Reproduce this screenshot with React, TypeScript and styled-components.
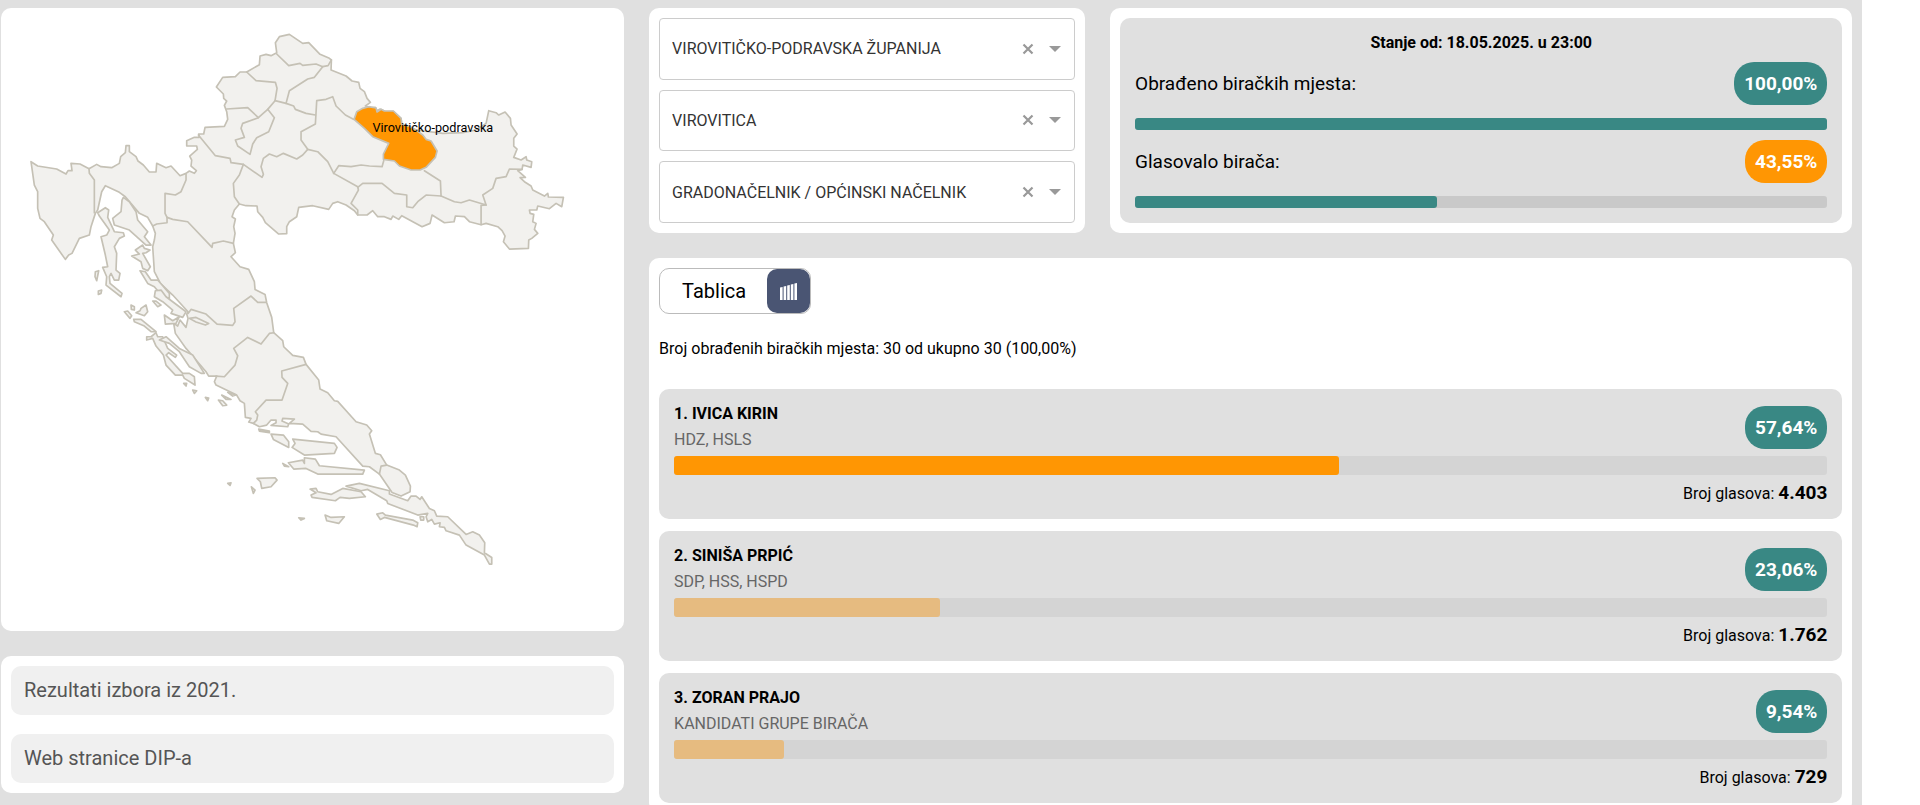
import React, { useState } from "react";
import styled, { createGlobalStyle } from "styled-components";

const GlobalStyle = createGlobalStyle`
  *, *::before, *::after { box-sizing: border-box; }
  body {
    margin: 0;
    background: #fff;
    color: #000;
    font: 400 16px/19px Roboto, "Liberation Sans", sans-serif;
  }
  button, select { font: inherit; }
`;

const Page = styled.main`
  display: grid;
  grid-template-columns: minmax(0, 29fr) minmax(0, 56fr);
  gap: 25px;
  align-items: start;
  width: 97%;
  min-height: 100vh;
  padding: 8px 10px 12px 1px;
  background: #e0e0e0;
`;

const Column = styled.div`
  display: flex;
  flex-direction: column;
  gap: 25px;
`;

const TopRow = styled.div`
  display: grid;
  grid-template-columns: minmax(0, 37fr) minmax(0, 63fr);
  gap: 25px;
`;

const Card = styled.section`
  padding: 10px;
  border-radius: 10px;
  background: #fff;
`;

const MapCard = styled.section`
  aspect-ratio: 1;
  border-radius: 10px;
  background: #fff;
`;

const MapSvg = styled.svg`
  display: block;
  width: 100%;
  height: 100%;
  fill: #f2f1ee;
  stroke: #c5c1b5;
  stroke-width: 5;
  stroke-linejoin: round;
  stroke-linecap: round;
`;

const Borders = styled.g`
  fill: none;
`;

const Selected = styled.path`
  fill: #ff9603;
`;

const MapLabel = styled.text`
  fill: #000;
  stroke: none;
  font-size: 38px;
`;

const LinkCard = styled(Card).attrs({ as: "nav" })`
  display: flex;
  flex-direction: column;
  gap: 19px;
`;

const PageLink = styled.a`
  padding: 12px 13px;
  border-radius: 10px;
  background: #f0f0f0;
  color: #555;
  font-size: 20px;
  line-height: 25px;
  text-decoration: none;
`;

const Filters = styled(Card)`
  display: grid;
  grid-auto-rows: 1fr;
  gap: 10px;
`;

const FilterBox = styled.div`
  display: flex;
  align-items: center;
  gap: 12px;
  padding: 0 12px;
  border: 1px solid #ccc;
  border-radius: 4px;
`;

const FilterSelect = styled.select`
  flex: 1;
  min-width: 0;
  height: 100%;
  padding: 0;
  border: 0;
  background: none;
  color: #333;
  appearance: none;
  text-overflow: ellipsis;
`;

const ClearButton = styled.button`
  display: flex;
  padding: 2px;
  border: 0;
  background: none;
  color: #999;
  cursor: pointer;
`;

const Status = styled.div`
  display: flex;
  flex-direction: column;
  gap: 10px;
  padding: 15px;
  border-radius: 10px;
  background: #e0e0e0;
`;

const StatusTitle = styled.h2`
  margin: 0;
  font-size: 16px;
  font-weight: 700;
  line-height: 19px;
  text-align: center;
`;

const StatusItem = styled.div`
  display: flex;
  flex-direction: column;
  gap: 13px;
`;

const SpreadRow = styled.div`
  display: flex;
  align-items: end;
  justify-content: space-between;
`;

const StatusLabel = styled.span`
  align-self: center;
  font-size: 19px;
  line-height: 23px;
`;

const Badge = styled.span<{ $color?: string }>`
  padding: 10px;
  border-radius: 20px;
  background: ${(p) => p.$color ?? "#398884"};
  color: #fff;
  font-size: 19px;
  font-weight: 700;
  line-height: 23px;
`;

const Track = styled.div<{ $height: number; $color: string }>`
  height: ${(p) => p.$height}px;
  border-radius: 3px;
  background: ${(p) => p.$color};
`;

const Fill = styled.div<{ $color: string }>`
  height: 100%;
  border-radius: 3px;
  background: ${(p) => p.$color};
`;

const Toggle = styled.div`
  display: flex;
  width: fit-content;
  height: 46px;
  border: 1px solid #bbb;
  border-radius: 10px;
`;

const TableButton = styled.button`
  padding: 0 21px 0 22px;
  border: 0;
  border-radius: 10px;
  background: none;
  color: #000;
  font-size: 20px;
  cursor: pointer;
`;

const ChartButton = styled.button`
  display: grid;
  place-items: center;
  width: 43px;
  padding: 0;
  border: 0;
  border-radius: 10px;
  background: #4a5573;
  cursor: pointer;
`;

const Summary = styled.p`
  margin: 25px 0 31px;
`;

const Results = styled.ol`
  display: flex;
  flex-direction: column;
  gap: 12px;
  margin: 0;
  padding: 0;
  list-style: none;
`;

const Result = styled.li`
  display: flex;
  flex-direction: column;
  padding: 15px;
  border-radius: 10px;
  background: #e0e0e0;
`;

const Candidate = styled.div`
  display: flex;
  flex-direction: column;
  gap: 7px;
`;

const CandidateRow = styled(SpreadRow)`
  margin-bottom: 7px;
`;

const Name = styled.strong`
  font-weight: 700;
`;

const Parties = styled.span`
  color: #666;
`;

const Votes = styled.p`
  display: flex;
  align-items: baseline;
  justify-content: flex-end;
  gap: 4px;
  margin: 6px 0 0;
`;

const VoteCount = styled.strong`
  font-size: 19px;
  font-weight: 700;
  line-height: 23px;
`;

const mainland =
  "M95 485L115 498L172 507L200 522L206 512L218 512L215 490L242 492L269 506L292 493L305 500L337 503L360 490L364 470L378 458L380 437L390 437L390 455L410 470L416 483L432 495L450 516L470 516L472 490L500 503L515 498L542 527L560 520L570 513L585 520L591 512L575 498L577 480L571 468L594 448L592 438L562 438L562 422L585 412L600 412L598 402L613 402L617 382L675 379L685 358L682 335L675 316L682 303L673 295L672 282L651 261L670 232L708 230L722 216L742 216L780 194L782 168L800 163L815 167L832 158L828 128L840 110L870 103L910 130L928 128L962 163L990 175L996 180L995 210L1040 228L1058 243L1078 247L1082 265L1095 275L1103 295L1113 307L1098 318L1115 323L1128 322L1133 332L1142 327L1160 335L1182 334L1205 355L1207 373L1250 390L1330 400L1390 398L1430 390L1460 370L1468 332L1490 338L1498 345L1517 336L1533 355L1535 375L1553 402L1543 415L1543 438L1553 447L1543 472L1565 480L1580 470L1582 480L1597 485L1595 502L1570 495L1568 508L1555 512L1578 532L1562 533L1575 545L1595 558L1600 570L1635 588L1645 580L1647 591L1692 592L1687 620L1670 610L1650 626L1615 618L1612 630L1590 630L1592 640L1603 643L1600 665L1610 670L1605 688L1615 700L1597 715L1588 720L1587 745L1530 747L1512 725L1517 708L1508 692L1495 680L1460 670L1445 674L1410 665L1395 650L1368 648L1364 665L1335 668L1298 645L1292 670L1268 680L1207 647L1198 658L1180 648L1175 658L1155 650L1135 650L1120 632L1103 645L1075 645L1065 632L1040 615L1015 605L1000 610L988 628L940 617L898 622L892 650L870 665L862 680L862 701L838 702L798 668L790 652L775 635L773 618L740 617L720 612L705 630L698 650L708 657L703 680L707 700L702 730L708 758L695 770L722 800L748 808L765 845L767 868L797 883L802 908L817 952L823 998L850 1022L853 1040L880 1066L912 1072L920 1093L958 1140L962 1167L985 1178L1005 1202L1015 1204L1070 1265L1102 1275L1117 1292L1110 1302L1128 1360L1143 1364L1162 1395L1200 1410L1218 1425L1233 1458L1232 1475L1205 1488L1178 1477L1140 1422L1110 1400L1090 1398L1010 1310L965 1302L955 1295L935 1294L910 1272L870 1270L885 1257L850 1255L848 1263L868 1272L865 1280L815 1276L830 1268L830 1260L815 1260L802 1275L780 1280L762 1270L748 1266L755 1255L738 1252L735 1210L722 1202L712 1185L650 1155L645 1145L652 1128L628 1128L620 1115L560 1045L528 1000L523 970L535 978L542 960L560 982L566 955L562 942L566 935L520 885L483 850L465 815L460 740L465 720L468 700L460 678L445 652L420 640L378 590L360 577L318 557L307 575L295 630L288 640L275 680L270 705L240 715L218 760L208 765L198 778L157 720L162 705L135 665L122 655L115 625L115 575L105 555Z";

const northBorders = [
  "M27 345L78 407L122 415L125 428L162 433L218 472L222 463L215 440L222 415L240 402L262 410L282 400L322 417L340 405L355 388",
  "M162 433L150 465L132 490L135 530L150 552",
  "M207 293L160 310L155 325L165 352L138 360L145 378L182 403L190 372L202 353L238 335L255 293L235 268Z",
  "M112 267L175 263L207 293",
  "M172 156L200 182L258 187L263 205L257 242L235 268",
  "M257 242L290 250L313 258L318 268L350 280L378 285",
  "M262 102L298 137L332 130L340 136L380 132L400 140L416 137L426 120",
  "M400 140L375 172L355 177L300 212L290 250",
  "M492 298L468 285L440 258L430 230L410 238L382 242L378 312L335 335L335 360L355 388L385 395L415 425L433 460",
  "M433 460L448 437L485 440L515 435L540 438L578 440L583 422",
  "M433 460L505 500L507 510L485 550L505 570L505 585",
];

const eastBorders = [
  "M85 322L100 310L158 310L195 340L232 345L232 380L250 383L265 365L290 345L335 348L333 303L285 272",
  "M335 348L375 365L395 368L420 360L470 375L460 345L490 325L500 295L530 290L540 267L578 268",
  "M470 375L455 376L455 434",
];

const westBorders = [
  "M209 116L210 130L225 150L225 248",
  "M500 133L500 150L485 185L468 195L437 190L437 250L443 262L443 278L412 282L400 288",
  "M443 262L460 268L505 275L578 352L580 340L612 333L642 340",
];

const zadarBorders = [
  "M296 220L305 208L350 222L383 252L430 256L437 245L433 205L485 168L505 187L530 187",
  "M380 408L405 410L437 375L445 347L433 325L475 292L515 312L540 280L553 278",
  "M650 373L577 393L578 412L595 430L578 480L530 480L498 515L505 525L502 540L492 550",
];

const kvarnerIslands = [
  "M235 248L258 233L268 240L265 262L285 305L312 308L315 318L300 325L285 350L292 370L290 420L302 430L298 450L285 450L275 430L270 440L272 460L308 490L305 500L260 465L262 440L250 412L265 410L258 375L245 320L262 315L270 300L240 258Z",
  "M312 202L330 215L350 245L355 270L385 305L375 320L395 345L380 345L330 300L285 285L280 265L305 245L308 210Z",
  "M348 360L370 345L375 355L392 360L380 368L370 370L393 410L385 422L370 415L365 395L337 378L360 372Z",
  "M362 422L378 425L395 450L415 450L450 490L450 505L430 500L405 470L385 460Z",
  "M408 482L425 480L440 500L500 545L490 562L455 550L460 540L430 515L405 500Z",
  "M435 555L460 572L480 560L470 580L438 582Z",
  "M228 425L238 422L232 452L227 440Z",
  "M237 483L247 480L245 490L237 493Z",
  "M315 545L325 543L337 557L332 565Z",
  "M335 525L345 530L345 540L336 538Z",
  "M365 535L380 525L385 545L375 557L350 548L362 542Z",
  "M400 513L410 513L425 525L415 530Z",
  "M510 565L530 562L568 580L558 585L530 576Z",
];

const zadarIslands = [
  "M133 238L155 238L200 275L185 275L165 258L135 245Z",
  "M172 290L185 290L200 278L205 290L220 290L235 325L262 345L258 352L238 338L230 345L280 400L300 400L315 410L317 435L285 415L280 405L258 405L230 375L222 345L200 318L190 295L172 300Z",
  "M210 300L230 290L270 325L310 345L345 400L335 400L300 380L270 335L240 310Z",
  "M283 430L292 430L290 438Z",
  "M310 450L322 452L315 460Z",
  "M348 472L358 474L355 482Z",
  "M387 480L400 482L412 495L400 497Z",
  "M397 465L425 478L410 478Z",
  "M415 457L440 465L430 468Z",
];

const southIslands = [
  "M500 378L540 370L630 392L630 402L685 422L695 408L710 408L722 418L727 410L750 445L765 452L772 468L805 470L860 523L880 515L900 525L916 548L915 578L937 592L937 612L930 612L915 585L860 555L840 525L800 512L795 502L780 500L782 488L765 492L757 478L745 485L740 470L745 460L715 465L625 430L622 422L565 388L545 392Z",
  "M275 222L312 225L328 245L328 262L282 238Z",
  "M238 207L270 213L270 218L240 213Z",
  "M340 237L465 250L473 262L465 280L375 285L338 262L347 250Z",
  "M327 308L370 300L375 310L375 293L408 297L420 317L555 330L550 342L415 342L380 325L343 327Z",
  "M310 310L328 320L315 318Z",
  "M233 355L287 353L293 360L275 380L247 385L243 365Z",
  "M216 380L227 390L222 400Z",
  "M145 370L155 368L152 376Z",
  "M392 387L410 385L415 395L455 403L490 385L545 395L558 410L510 415L482 412L468 422L398 412L395 405L410 398Z",
  "M437 465L455 472L495 470L478 490L442 482Z",
  "M358 473L375 475L365 480Z",
  "M592 462L610 458L618 465L700 480L715 488L713 500L702 495L615 472L603 478Z",
  "M722 470L733 470L733 480L724 480Z",
];

const selectedCounty =
  "M74 118L82 95L100 85L118 80L140 84L143 96L155 88L165 93L192 93L215 115L217 133L238 138L260 150L280 165L290 178L305 183L323 213L318 232L290 262L272 270L245 270L210 258L195 243L162 238L162 222L178 190L130 170L105 145Z";

const paths = (list: string[]) => list.map((d) => <path key={d} d={d} />);

function CountyMap() {
  return (
    <MapSvg viewBox="5 24 1869 1869" role="img" aria-label="Karta županija">
      <path d={mainland} />
      <g transform="translate(60 390)">{paths(kvarnerIslands)}</g>
      <g transform="translate(270 720)">{paths(zadarIslands)}</g>
      <g transform="translate(540 1080)">{paths(southIslands)}</g>
      <Borders>
        <g transform="translate(570 60)">{paths(northBorders)}</g>
        <g transform="translate(990 240)">{paths(eastBorders)}</g>
        <g transform="translate(60 390)">{paths(westBorders)}</g>
        <g transform="translate(270 720)">{paths(zadarBorders)}</g>
        <path d="M1162 1395L1145 1398L1140 1422" />
      </Borders>
      <g transform="translate(990 240)">
        <Selected d={selectedCounty} />
        <MapLabel x="129" y="157">Virovitičko-podravska</MapLabel>
      </g>
    </MapSvg>
  );
}

function Filter({ label, option }: { label: string; option: string }) {
  const [value, setValue] = useState(option);
  return (
    <FilterBox>
      <FilterSelect aria-label={label} value={value} onChange={(e) => setValue(e.target.value)}>
        <option value="" />
        <option value={option}>{option}</option>
      </FilterSelect>
      <ClearButton type="button" aria-label={`Očisti: ${label}`} onClick={() => setValue("")}>
        <svg width="12" height="12" viewBox="0 0 12 12" stroke="currentColor" strokeWidth="2.2">
          <path d="M1.5 1.5L10.5 10.5M10.5 1.5L1.5 10.5" />
        </svg>
      </ClearButton>
      <svg width="14" height="8" viewBox="0 0 14 8" fill="#999" aria-hidden="true">
        <path d="M1 1H13L7 7Z" />
      </svg>
    </FilterBox>
  );
}

interface ProgressProps {
  label: string;
  value: number;
  height: number;
  color: string;
  track: string;
}

function Progress({ label, value, height, color, track }: ProgressProps) {
  return (
    <Track
      role="progressbar"
      aria-label={label}
      aria-valuenow={value}
      aria-valuemin={0}
      aria-valuemax={100}
      $height={height}
      $color={track}
    >
      <Fill $color={color} style={{ width: `${value}%` }} />
    </Track>
  );
}

const percent = (value: number) => `${value.toFixed(2).replace(".", ",")}%`;

const filters = [
  { label: "Županija", option: "VIROVITIČKO-PODRAVSKA ŽUPANIJA" },
  { label: "Grad / općina", option: "VIROVITICA" },
  { label: "Vrsta izbora", option: "GRADONAČELNIK / OPĆINSKI NAČELNIK" },
];

const turnout = [
  { label: "Obrađeno biračkih mjesta:", value: 100, badge: "#398884" },
  { label: "Glasovalo birača:", value: 43.55, badge: "#ff9603" },
];

const candidates = [
  { name: "IVICA KIRIN", parties: "HDZ, HSLS", share: 57.64, votes: "4.403", color: "#ff9603" },
  { name: "SINIŠA PRPIĆ", parties: "SDP, HSS, HSPD", share: 23.06, votes: "1.762", color: "#e6bb80" },
  { name: "ZORAN PRAJO", parties: "KANDIDATI GRUPE BIRAČA", share: 9.54, votes: "729", color: "#e6bb80" },
];

export default function App() {
  return (
    <>
      <GlobalStyle />
      <Page>
        <Column>
          <MapCard>
            <CountyMap />
          </MapCard>
          <LinkCard>
            <PageLink href="#rezultati-2021">Rezultati izbora iz 2021.</PageLink>
            <PageLink href="#dip">Web stranice DIP-a</PageLink>
          </LinkCard>
        </Column>
        <Column>
          <TopRow>
            <Filters>
              {filters.map((f) => (
                <Filter key={f.label} {...f} />
              ))}
            </Filters>
            <Card>
              <Status>
                <StatusTitle>Stanje od: 18.05.2025. u 23:00</StatusTitle>
                {turnout.map((t) => (
                  <StatusItem key={t.label}>
                    <SpreadRow>
                      <StatusLabel>{t.label}</StatusLabel>
                      <Badge $color={t.badge}>{percent(t.value)}</Badge>
                    </SpreadRow>
                    <Progress label={t.label} value={t.value} height={12} color="#398884" track="#c9c9c9" />
                  </StatusItem>
                ))}
              </Status>
            </Card>
          </TopRow>
          <Card>
            <Toggle>
              <TableButton type="button">Tablica</TableButton>
              <ChartButton type="button" aria-label="Grafikon">
                <svg width="18" height="18" viewBox="0 0 18 18" fill="#fff" aria-hidden="true">
                  <path d="M0 5.5L2.6 5V18H0ZM3.6 4.5L6.2 4V18H3.6ZM7.2 3.5L9.8 3V18H7.2ZM10.8 2.5L13.4 2V18H10.8ZM14.4 1.5L17 1V18H14.4Z" />
                </svg>
              </ChartButton>
            </Toggle>
            <Summary>Broj obrađenih biračkih mjesta: 30 od ukupno 30 (100,00%)</Summary>
            <Results>
              {candidates.map((c, i) => (
                <Result key={c.name}>
                  <CandidateRow>
                    <Candidate>
                      <Name>{`${i + 1}. ${c.name}`}</Name>
                      <Parties>{c.parties}</Parties>
                    </Candidate>
                    <Badge>{percent(c.share)}</Badge>
                  </CandidateRow>
                  <Progress label={c.name} value={c.share} height={19} color={c.color} track="#d4d4d4" />
                  <Votes>
                    Broj glasova: <VoteCount>{c.votes}</VoteCount>
                  </Votes>
                </Result>
              ))}
            </Results>
          </Card>
        </Column>
      </Page>
    </>
  );
}
